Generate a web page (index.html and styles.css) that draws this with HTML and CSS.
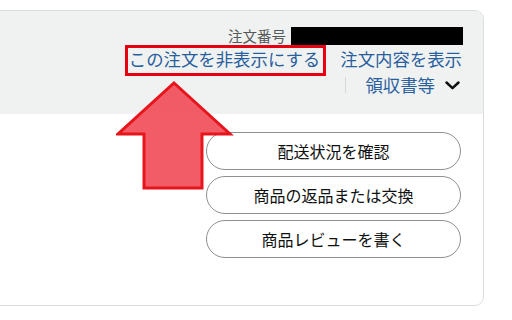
FILE: index.html
```html
<!DOCTYPE html>
<html lang="ja">
<head>
<meta charset="utf-8">
<link rel="stylesheet" href="styles.css">
</head>
<body>
<div class="card">
  <div class="head">
    <div class="row order">
      <span class="label">注文番号</span>
      <span class="redact"></span>
    </div>
    <div class="row links">
      <a class="link marked">この注文を非表示にする</a>
      <a class="link">注文内容を表示</a>
    </div>
    <div class="row receipt">
      <span class="sep"></span>
      <a class="link">領収書等</a>
      <svg class="chev" width="15" height="9" viewBox="0 0 15 9"><path d="M1.5 1.5 L7.5 7.2 L13.5 1.5" fill="none" stroke="#111" stroke-width="2.5" stroke-linecap="round" stroke-linejoin="round"/></svg>
    </div>
  </div>
  <div class="body">
    <div class="actions">
      <button class="btn">配送状況を確認</button>
      <button class="btn">商品の返品または交換</button>
      <button class="btn">商品レビューを書く</button>
    </div>
  </div>
  <svg class="arrow" width="120" height="112" viewBox="0 0 120 112">
    <path d="M58 2 L114 53 L86 53 L86 107 L28 107 L28 53 L2 53 Z" fill="rgba(240,70,82,0.88)" stroke="#e8141c" stroke-width="3" stroke-linejoin="miter"/>
  </svg>
</div>
</body>
</html>
```
FILE: styles.css
```css
* { box-sizing: border-box; }
html, body { margin: 0; padding: 0; background: #fff; }
body {
  font-family: "Noto Sans CJK JP", "Noto Sans", sans-serif;
  width: 512px;
  height: 320px;
  overflow: hidden;
}
.card {
  position: relative;
  margin: 10px 0 0 -10px;
  width: 494px;
  height: 296px;
  border: 1px solid #dcdede;
  border-radius: 9px;
  overflow: hidden;
}
.head {
  background: #f0f2f2;
  padding: 16px 20px 19px 0;
  display: flex;
  flex-direction: column;
  align-items: flex-end;
}
.row { display: flex; align-items: center; }
.order { height: 18px; }
.label {
  font-size: 14.5px;
  line-height: 18px;
  color: #565959;
  margin-right: 5px;
}
.redact {
  display: block;
  width: 172px;
  height: 18px;
  background: #000;
}
.links { height: 24px; margin-top: 2px; margin-right: 1px; }
.link {
  font-size: 17.4px;
  line-height: 24px;
  color: #2a5f9e;
  text-decoration: none;
}
.links .link + .link { margin-left: 20px; }
.marked { position: relative; }
.marked::after {
  content: "";
  position: absolute;
  left: -4px;
  right: -6px;
  top: -2px;
  bottom: -5px;
  border: 3px solid #e60012;
}
.receipt { height: 20px; margin-top: 4px; }
.sep {
  display: block;
  width: 1px;
  height: 16px;
  background: #d5d9d9;
  margin-right: 19px;
}
.receipt .link { line-height: 20px; }
.chev { margin-left: 10px; margin-right: 3px; display: block; }
.body {
  padding: 18px 22px 0 0;
  display: flex;
  justify-content: flex-end;
}
.actions {
  display: flex;
  flex-direction: column;
  gap: 6px;
  width: 255px;
}
.btn {
  height: 38px;
  border: 1px solid #8d9090;
  border-radius: 19px;
  background: #fff;
  font-family: inherit;
  font-size: 16px;
  color: #0f1111;
  padding: 0;
}
.arrow {
  position: absolute;
  left: 125px;
  top: 70px;
}
```
